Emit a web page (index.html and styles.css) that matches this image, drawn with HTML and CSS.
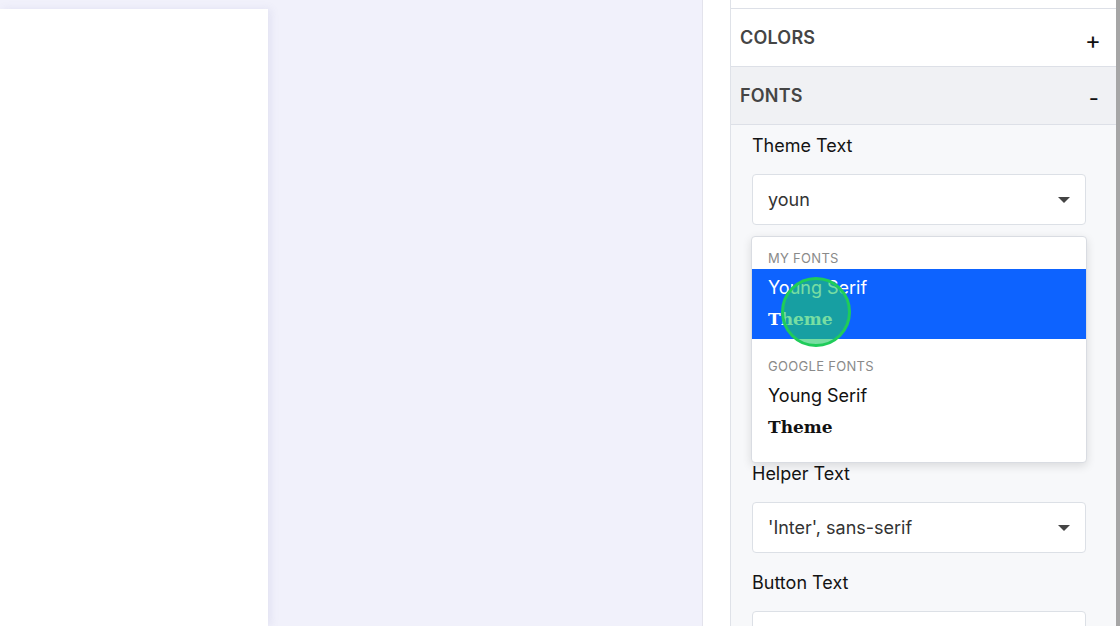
FILE: index.html
```html
<!DOCTYPE html>
<html lang="en">
<head>
    <meta charset="UTF-8">
    <meta name="viewport" content="width=device-width, initial-scale=1.0">
    <title>Theme Editor</title>
    <link rel="stylesheet" href="styles.css">
</head>
<body>
    <div class="canvas">
        <div class="page-preview"></div>
    </div>

    <div class="sidebar">
        <div class="panel">
            <div class="section-top"></div>

            <div class="section-header">
                <span>COLORS</span>
                <span class="toggle">+</span>
            </div>

            <div class="section-header active">
                <span>FONTS</span>
                <span class="toggle minus">-</span>
            </div>

            <div class="section-body">
                <div class="field">
                    <label>Theme Text</label>
                    <div class="select">
                        <span>youn</span>
                        <span class="caret"></span>
                    </div>

                    <div class="dropdown">
                        <div class="group-title">My Fonts</div>
                        <div class="option selected">
                            <div class="option-name">Young Serif</div>
                            <div class="option-sample">Theme</div>
                            <span class="cursor"></span>
                        </div>
                        <div class="group-title spaced">Google Fonts</div>
                        <div class="option">
                            <div class="option-name">Young Serif</div>
                            <div class="option-sample">Theme</div>
                        </div>
                    </div>
                </div>

                <div class="field">
                    <label>Helper Text</label>
                    <div class="select"><span>'Inter', sans-serif</span><span class="caret"></span></div>
                </div>

                <div class="field">
                    <label>Button Text</label>
                    <div class="select"></div>
                </div>
            </div>
        </div>
        <div class="scrollbar"></div>
    </div>
</body>
</html>
```

FILE: styles.css
```css
body {
    margin: 0;
    height: 626px;
    overflow: hidden;
    display: flex;
    font-family: Inter, "Noto Sans", sans-serif;
    background: #f1f1fb;
}
.canvas {
    width: 703px;
    padding-top: 9px;
    box-sizing: border-box;
    border-right: 1px solid #e3e3ec;
}
.page-preview {
    width: 268px;
    height: 100%;
    background: #fff;
    box-shadow: 3px 0 8px rgba(120, 120, 180, 0.12);
}
.sidebar {
    flex: 1;
    display: flex;
    background: #fff;
    padding-left: 27px;
}
.panel {
    flex: 1;
    border-left: 1px solid #dfe2e8;
    background: #f7f8fa;
}
.section-top {
    height: 8px;
    background: #fff;
    border-bottom: 1px solid #dde0e7;
}
.section-header {
    height: 57px;
    display: flex;
    align-items: center;
    justify-content: space-between;
    padding: 0 15px 0 9px;
    background: #fff;
    border-bottom: 1px solid #dde0e7;
    font-size: 18px;
    font-weight: 600;
    color: #454545;
    letter-spacing: 0.2px;
}
.section-header.active {
    background: #f0f1f4;
}
.toggle {
    font-size: 24px;
    font-weight: 400;
    color: #111;
    margin-top: 5px;
}
.toggle.minus {
    font-size: 22px;
    margin-right: 2px;
}
.section-body {
    padding: 9px 30px 0 21px;
}
.field {
    margin-bottom: 18px;
}
.field label {
    display: block;
    font-size: 18px;
    line-height: 24px;
    color: #141414;
    margin-bottom: 16px;
}
.select {
    height: 51px;
    box-sizing: border-box;
    border: 1px solid #dce0e6;
    border-radius: 4px;
    background: #fff;
    display: flex;
    align-items: center;
    justify-content: space-between;
    padding: 0 15px;
    font-size: 18px;
    color: #333;
}
.caret {
    width: 0;
    height: 0;
    border-left: 6px solid transparent;
    border-right: 6px solid transparent;
    border-top: 6px solid #444;
}
.dropdown {
    position: relative;
    margin: 11px -1px -19px;
    background: #fff;
    border: 1px solid #d9dce2;
    border-radius: 4px;
    box-shadow: 0 3px 10px rgba(0, 0, 0, 0.12);
    padding: 13px 0 15px;
}
.group-title {
    font-size: 13px;
    line-height: 16px;
    color: #8a8a8a;
    text-transform: uppercase;
    letter-spacing: 0.3px;
    padding-left: 16px;
    margin-bottom: 3px;
}
.group-title.spaced {
    margin-top: 19px;
}
.option {
    position: relative;
    padding: 7px 16px 8px;
    color: #111;
}
.option.selected {
    background: #0d63ff;
    color: #fff;
}
.option-name {
    font-size: 18px;
    line-height: 24px;
}
.option-sample {
    font-family: "DejaVu Serif", "Liberation Serif", serif;
    font-weight: bold;
    font-size: 17px;
    line-height: 24px;
    margin-top: 7px;
}
.cursor {
    position: absolute;
    left: 29px;
    top: 8px;
    width: 64px;
    height: 64px;
    border: 3px solid #1fcc5a;
    border-radius: 50%;
    background: rgba(30, 200, 100, 0.6);
}
.scrollbar {
    width: 4px;
    background: #a6a6a6;
}
```
